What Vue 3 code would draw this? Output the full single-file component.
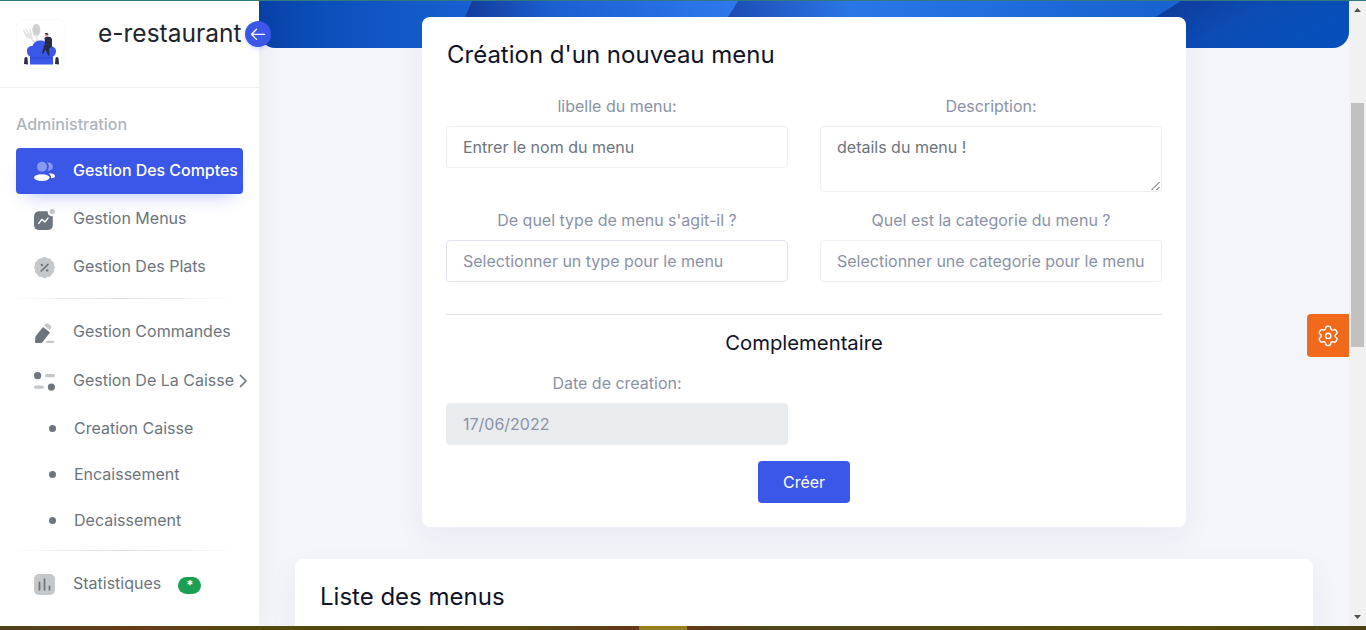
<script setup>
const main = [
  { label: 'Gestion Des Comptes', icon: 'users', active: true },
  { label: 'Gestion Menus', icon: 'chart' },
  { label: 'Gestion Des Plats', icon: 'percent' },
]
const orders = [
  { label: 'Gestion Commandes', icon: 'pencil' },
  { label: 'Gestion De La Caisse', icon: 'sliders', chevron: true },
]
const cash = ['Creation Caisse', 'Encaissement', 'Decaissement']
const stats = [{ label: 'Statistiques', icon: 'bars', badge: '*' }]
const groups = [
  { items: main, subs: [], name: 'g-main' },
  { items: orders, subs: cash, name: 'g-orders' },
  { items: stats, subs: [], name: 'g-stats' },
]
</script>

<template>
  <div class="screen">
    <div class="edge-top"></div>
    <div class="view">
      <aside class="sidebar">
        <header class="brand">
          <svg class="logo" width="50" height="50" viewBox="0 0 50 50">
            <rect x=".5" y=".5" width="49" height="49" rx="7" fill="#fff" stroke="#fafafb" />
            <g fill="#e2e2e2">
              <ellipse cx="20.3" cy="11" rx="4" ry="6.2" fill="#cfcfcf" />
              <path d="M19.6 15h1.5l1 10h-1.8z" />
              <path d="M7 11l1-.5 3 5 .8-.4-2.4-5.3.9-.3 3 5 .8-.5-1.2-4.500.8-.1c2 4 3.400 7 2.200 9.200l3.500 5-1.200 1-3.800-5.200C10.500 19.500 8.500 16 7 11z" />
            </g>
            <path d="M11 32c0-3.500 2-5 5.500-5 1.500-4 4.500-5.500 8-5.500s6 1.500 8 5.500c4.500 0 7.500 1.500 7.500 5 0 3-1.500 5-3 5.500V45.500H14V37.500c-1.800-.5-3-2.500-3-5.500z" fill="#3a57e8" />
            <path d="M14 39h22" stroke="#2945c6" stroke-width=".7" />
            <path d="M28.500 19l2-1.500 4 .5 1.500 2v7.500l-3 2.500.5 6.500h-1.500l-2.500-6-2 4-1.500-.6 2-7 1-2z" fill="#272b43" />
            <circle cx="30.700" cy="16" r="1.700" fill="#e2a19e" />
            <path d="M28.800 15c0-1.500 3-1.500 3.500 0v1z" fill="#292d3c" />
            <path d="M8 45l.5-6q1.500-2 3 0l.5 6.500zM39 45l.5-6q1.500-2 3 0l.5 6.500z" fill="#2f2e41" />
          </svg>
          <span class="brand-name">e-restaurant</span>
          <button class="toggle">
            <svg width="26" height="26" viewBox="0 0 26 26" fill="none" stroke="#fff" stroke-width="1.300" stroke-linecap="round" stroke-linejoin="round"><path d="M19.500 13.300h-13M11.500 8.200l-5 5.100 5 5.100" /></svg>
          </button>
        </header>
        <nav class="nav">
          <div class="nav-title">Administration</div>
          <section v-for="g in groups" :key="g.name" class="group" :class="g.name">
            <a v-for="i in g.items" :key="i.label" class="item" :class="{ active: i.active }">
              <svg class="icon" width="22" height="22" viewBox="0 0 22 22">
                <g v-if="i.icon === 'users'" fill="#fff">
                  <circle cx="8" cy="6.800" r="5" opacity=".4" />
                  <path d="M13.200 2.500c7.600-.6 7.600 8.900 0 8.300 2.200-2.500 2.200-5.800 0-8.300z" opacity=".4" />
                  <ellipse cx="7.800" cy="17.600" rx="7.800" ry="3.300" />
                  <path d="M14.500 13.200c4-.1 6.500 1 6.500 2.900 0 1.400-1.400 2.200-3.800 2.200.1-2.200-1-3.900-2.700-5.100z" />
                </g>
                <g v-else-if="i.icon === 'chart'" transform="translate(0 .7)">
                  <path d="M5.500 2.500h8.200c-.2 3.100 1.500 5.100 5.100 5.100V16q0 5.300-5.300 5.300h-8Q0 21.300 0 16V8q0-5.500 5.500-5.500z" fill="#6c757d" />
                  <path d="M4.800 14.700l3-4 3.200 2.500 3-3.800" fill="none" stroke="#fff" stroke-width="1.400" stroke-linecap="round" stroke-linejoin="round" />
                  <circle cx="18.300" cy="2.900" r="2.700" fill="#c4c8cb" />
                </g>
                <g v-else-if="i.icon === 'percent'">
                  <path d="M8 2.200Q10.500-.9 13 2.200q4.400-.2 4.800 3 3 .8 2.100 4.600 2.100 1.700 0 3.500.9 3.800-2.100 4.600-.4 3.200-4.800 3-2.500 2.500-5 0-4.400.2-4.800-3-3-.8-2.100-4.600-2.100-1.800 0-3.500Q.2 6 3.200 5.200 3.600 2 8 2.200z" fill="#c4c8cb" />
                  <path d="M7.300 15l6.600-6.600" stroke="#6c757d" stroke-width="1.700" stroke-linecap="round" />
                  <circle cx="7.900" cy="8.900" r="1.200" fill="#6c757d" /><circle cx="13.200" cy="14.400" r="1.200" fill="#6c757d" />
                </g>
                <g v-else-if="i.icon === 'pencil'" transform="translate(0 1.200)">
                  <path d="M9 4.700l7 5.500-7.300 9.600q-.8 1-2 1H2q-1 0-1-1l.3-4.500q.1-1 .7-1.700z" fill="#6c757d" />
                  <path d="M10 3.300l1.600-1.600q1.500-1.200 3.200 0l1.600 1.400q1.600 1.400.5 3l-1 1.800z" fill="#c4c8cb" />
                  <rect x="12" y="18.500" width="8" height="2.300" rx="1.100" fill="#c4c8cb" />
                </g>
                <g v-else-if="i.icon === 'sliders'">
                  <circle cx="3.600" cy="5.700" r="3.600" fill="#6c757d" /><circle cx="17.400" cy="17.100" r="3.600" fill="#6c757d" />
                  <rect x="11" y="4" width="10" height="3.200" rx="1.600" fill="#c4c8cb" /><rect x="0" y="15.500" width="10" height="3.200" rx="1.600" fill="#c4c8cb" />
                </g>
                <g v-else>
                  <rect y="1" width="21" height="21" rx="5" fill="#c4c8cb" />
                  <path d="M5.500 9.500v7.300M10.500 6.200v10.600M15.500 13.300v3.500" stroke="#6c757d" stroke-width="1.800" stroke-linecap="round" />
                </g>
              </svg>
              <span class="label">{{ i.label }}</span>
              <svg v-if="i.chevron" class="chevron" width="9" height="14" viewBox="0 0 9 14" fill="none" stroke="#6c757d" stroke-width="1.700" stroke-linecap="round" stroke-linejoin="round"><path d="M1.500 1.500L7 7l-5.500 5.500" /></svg>
              <span v-if="i.badge" class="badge">{{ i.badge }}</span>
            </a>
            <a v-for="s in g.subs" :key="s" class="sub"><i class="dot"></i>{{ s }}</a>
          </section>
        </nav>
      </aside>

      <main class="content">
        <svg class="banner" width="1090" height="47" viewBox="0 0 1090 47" preserveAspectRatio="none">
          <defs>
            <linearGradient id="a"><stop stop-color="#0842a6" /><stop offset=".25" stop-color="#0b4fbb" /><stop offset="1" stop-color="#1d66da" /></linearGradient>
            <linearGradient id="b"><stop stop-color="#123792" /><stop offset=".35" stop-color="#1c60d2" /><stop offset="1" stop-color="#2e7bee" /></linearGradient>
            <linearGradient id="c"><stop stop-color="#1b46ab" /><stop offset=".3" stop-color="#2b77e8" /><stop offset="1" stop-color="#1761d0" /></linearGradient>
            <linearGradient id="d" x2="1" y2=".35"><stop stop-color="#10318c" /><stop offset=".6" stop-color="#0c4cb3" /><stop offset="1" stop-color="#064fba" /></linearGradient>
          </defs>
          <rect width="260" height="47" fill="url(#a)" />
          <path d="M213 0h270l-26 47H193z" fill="url(#b)" />
          <path d="M479 0h445l-75 47H450z" fill="url(#c)" />
          <path d="M922 0h168v47H848z" fill="url(#d)" />
        </svg>
        <section class="card form-card">
          <h4 class="heading">Création d'un nouveau menu</h4>
          <div class="fields">
            <label class="field"><span>libelle du menu:</span><div class="input placeholder">Entrer le nom du menu</div></label>
            <label class="field">
              <span>Description:</span>
              <div class="input area placeholder">details du menu !
                <svg class="grip" width="10" height="10" viewBox="0 0 10 10" stroke="#555" stroke-width="1"><path d="M.5 9l8-8M5.500 9L8.500 6" /></svg>
              </div>
            </label>
            <label class="field"><span>De quel type de menu s'agit-il ?</span><div class="input select">Selectionner un type pour le menu</div></label>
            <label class="field"><span>Quel est la categorie du menu ?</span><div class="input">Selectionner une categorie pour le menu</div></label>
          </div>
          <hr class="rule" />
          <h5 class="subheading">Complementaire</h5>
          <div class="fields date"><label class="field"><span>Date de creation:</span><div class="input disabled">17/06/2022</div></label></div>
          <button class="submit">Créer</button>
        </section>
        <section class="card list-card"><h4 class="heading">Liste des menus</h4></section>
        <button class="settings">
          <svg width="24" height="24" viewBox="0 0 24 24" fill="none" stroke="#fff" stroke-width="1.400" stroke-linejoin="round"><path d="M20.800 7.620l-.62-1.080a1.910 1.910 0 0 0-2.600-.7 1.910 1.910 0 0 1-2.870-1.600 1.910 1.910 0 0 0-1.910-1.960h-1.260a1.910 1.910 0 0 0-1.900 1.910 1.910 1.910 0 0 1-2.830 1.630 1.910 1.910 0 0 0-2.610.7l-.67 1.100a1.910 1.910 0 0 0 .7 2.610 1.910 1.910 0 0 1 0 3.320 1.910 1.910 0 0 0-.7 2.600l.63 1.080a1.910 1.910 0 0 0 2.610.75 1.910 1.910 0 0 1 2.860 1.610 1.910 1.910 0 0 0 1.910 1.910h1.260a1.910 1.910 0 0 0 1.910-1.900 1.910 1.910 0 0 1 2.830-1.660 1.910 1.910 0 0 0 2.610-.7l.66-1.100a1.910 1.910 0 0 0-.7-2.600 1.910 1.910 0 0 1 0-3.310 1.910 1.910 0 0 0 .69-2.610z" /><circle cx="12.170" cy="11.890" r="2.640" /></svg>
        </button>
      </main>

      <div class="scrollbar">
        <svg width="17" height="17" viewBox="0 0 17 17"><path d="M5 11l3.500-4 3.500 4z" fill="#505050" /></svg>
        <div class="thumb"></div>
        <svg class="down" width="17" height="17" viewBox="0 0 17 17"><path d="M5 6l3.500 4L12 6z" fill="#505050" /></svg>
      </div>
    </div>
    <div class="edge-bottom"><i></i></div>
  </div>
</template>

<style>
body { overflow: hidden; }
</style>

<style scoped>
* { box-sizing: border-box; }
.screen { display: flex; flex-direction: column; width: 1366px; height: 630px; overflow: hidden; font: 400 16px/28px Inter, "Liberation Sans", sans-serif; color: #8a92a6; }
.edge-top { height: 1px; flex: none; background: #32797d; }
.view { flex: none; height: 625px; display: flex; overflow: hidden; background: #f4f5fa; }
.edge-bottom { height: 4px; flex: none; background: linear-gradient(90deg, #4e431b, #6a3b18 10%, #534a10 18%, #574b12 38%, #64391a 46%, #64391a 50%, #4f481a 56%, #574e0b 84%, #4b4315); }
.edge-bottom i { display: block; width: 48px; height: 4px; margin-left: 639px; background: #94801f; }

.sidebar { position: relative; z-index: 2; width: 259px; flex: none; background: #fff; box-shadow: 0 0 30px rgba(8, 21, 66, .05); }
.brand { position: relative; display: flex; height: 87px; border-bottom: 1px solid #eeeeef; padding: 18px 0 0 16px; }
.brand-name { margin: 1px 0 0 32px; font-size: 24.500px; line-height: 26px; white-space: nowrap; color: #212529; }
.toggle { position: absolute; right: -12px; top: 20px; width: 26px; height: 26px; padding: 0; border: 0; border-radius: 50%; background: #3a57e8; box-shadow: 0 2px 4px rgba(58, 87, 232, .2); }
.toggle svg { display: block; }
.nav { padding: 22px 16px 0; color: #6c757d; }
.nav-title { height: 38px; font-weight: 500; color: #adb5bd; line-height: 28px; }
.group + .group::before { content: ""; display: block; height: 1px; background: linear-gradient(90deg, transparent, #dcdddf 50%, transparent); margin: 0 5px 10px -10px; }
.item { display: flex; align-items: center; height: 46px; margin-bottom: 2px; padding-left: 18px; border-radius: 4px; white-space: nowrap; }
.item .label { margin: -2px 0 0 17px; }
.item.active { background: #3a57e8; color: #fff; font-weight: 500; letter-spacing: -.04px; box-shadow: 0 10px 20px -10px rgba(58, 87, 232, .4); }
.icon { flex: none; overflow: visible; }
.g-orders { margin-top: 8px; }
.g-orders .item + .item { margin: 3px 0 1px; }
.chevron { flex: none; margin-left: 5px; }
.sub { display: flex; align-items: center; height: 46px; padding-left: 33px; }
.dot { width: 7px; height: 7px; margin: 1px 18px 0 0; border-radius: 50%; background: #6c757d; }
.g-stats { margin-top: 7px; }
.badge { width: 23px; height: 17px; margin: 2px 0 0 17px; border-radius: 9px; background: #1aa053; color: #fff; font-size: 13px; font-weight: 700; line-height: 17px; text-align: center; }

.content { position: relative; width: 1090px; flex: none; }
.banner { display: block; border-radius: 0 0 16px 16px; }
.card { position: relative; background: #fff; border-radius: 8px; box-shadow: 0 10px 30px rgba(17, 38, 146, .05); }
.form-card { width: 764px; height: 510px; margin: -31px 0 0 163px; padding: 24px; }
.heading { margin: 0 0 0 1px; font-size: 24px; line-height: 28px; font-weight: 400; color: #111327; white-space: nowrap; }
.fields { display: grid; grid-template-columns: 342px 342px; column-gap: 32px; row-gap: 14px; margin-top: 23px; }
.field { display: block; }
.field > span { display: block; height: 28px; margin-bottom: 6px; line-height: 28px; text-align: center; }
.input { position: relative; height: 42px; border: 1px solid #eee; border-radius: 4px; padding: 6px 16px; line-height: 28px; white-space: nowrap; }
.placeholder { color: #6c757d; }
.area { height: 66px; }
.grip { position: absolute; right: 0; bottom: 0; }
.select { border-color: #e0e3ee; }
.disabled { background: #e9ecef; border-color: #e9ecef; }
.rule { height: 1px; border: 0; margin: 32px 0 0; background: #e3e4e6; }
.subheading { margin: 14px 0 0; font-size: 20.300px; line-height: 28px; font-weight: 400; color: #111327; text-align: center; }
.date { margin-top: 12px; }
.submit { display: block; width: 92px; height: 42px; margin: 16px auto 0; border: 0; border-radius: 4px; background: #3a57e8; color: #fff; font: inherit; }
.list-card { width: 1018px; height: 120px; margin: 32px 0 0 36px; padding: 24px; }
.settings { position: absolute; right: 0; top: 313px; width: 42px; height: 43px; padding: 0; border: 0; border-radius: 4px 0 0 4px; background: #f16a1b; display: grid; place-items: center; }

.scrollbar { width: 17px; flex: none; display: flex; flex-direction: column; background: #f1f1f1; }
.thumb { width: 13px; height: 244px; margin: 85px 0 0 2px; background: #c1c1c1; }
.down { margin-top: auto; }
</style>
